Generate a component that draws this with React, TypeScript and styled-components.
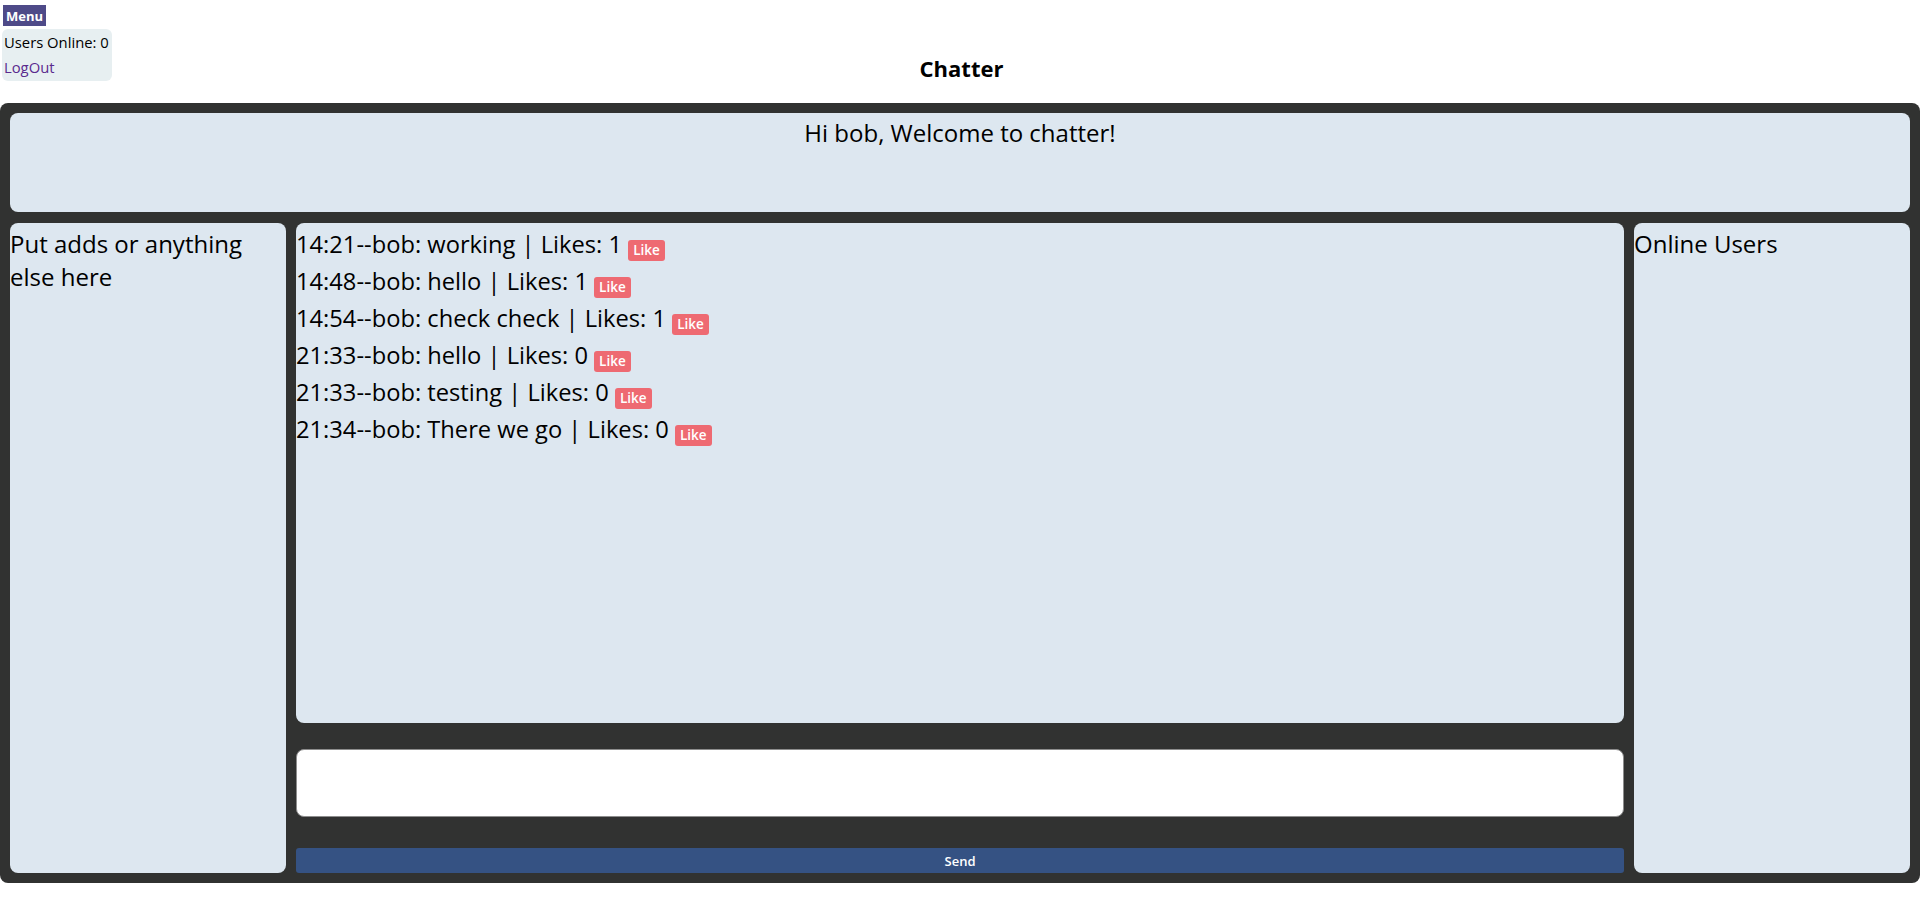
import styled, { createGlobalStyle } from "styled-components";

const GlobalStyle = createGlobalStyle`
  body {
    margin: 0;
    background: #ffffff;
    font-family: "Open Sans", "Noto Sans", sans-serif;
    color: #000000;
  }
`;

type Message = {
  time: string;
  user: string;
  text: string;
  likes: number;
};

const messages: Message[] = [
  { time: "14:21", user: "bob", text: "working", likes: 1 },
  { time: "14:48", user: "bob", text: "hello", likes: 1 },
  { time: "14:54", user: "bob", text: "check check", likes: 1 },
  { time: "21:33", user: "bob", text: "hello", likes: 0 },
  { time: "21:33", user: "bob", text: "testing", likes: 0 },
  { time: "21:34", user: "bob", text: "There we go", likes: 0 },
];

const App = () => {
  return (
    <>
      <GlobalStyle />
      <TopBar>
        <NavColumn>
          <MenuButton>Menu</MenuButton>
          <UserBox>
            <span>Users Online: 0</span>
            <LogOutLink href="#">LogOut</LogOutLink>
          </UserBox>
        </NavColumn>
        <Title>Chatter</Title>
      </TopBar>
      <Board>
        <Welcome>Hi bob, Welcome to chatter!</Welcome>
        <Columns>
          <SidePanel>Put adds or anything else here</SidePanel>
          <ChatColumn>
            <MessageList>
              {messages.map((m, i) => (
                <MessageRow key={i}>
                  {m.time}--{m.user}: {m.text} | Likes: {m.likes}{" "}
                  <LikeButton>Like</LikeButton>
                </MessageRow>
              ))}
            </MessageList>
            <MessageInput />
            <SendButton>Send</SendButton>
          </ChatColumn>
          <SidePanel>Online Users</SidePanel>
        </Columns>
      </Board>
    </>
  );
};

const TopBar = styled.div`
  display: grid;
  grid-template-columns: 1fr auto 1fr;
  align-items: end;
  height: 103px;
  padding-left: 3px;
  box-sizing: border-box;
`;

const NavColumn = styled.div`
  display: flex;
  flex-direction: column;
  align-items: flex-start;
  align-self: start;
  padding-top: 5px;
`;

const MenuButton = styled.button`
  background: #4e4a88;
  color: #ffffff;
  border: none;
  font-family: "Open Sans", sans-serif;
  font-weight: bold;
  font-size: 13px;
  height: 21px;
  width: 43px;
  padding: 0;
`;

const UserBox = styled.div`
  display: flex;
  flex-direction: column;
  margin-top: 3px;
  margin-left: -1px;
  background: #e7eff1;
  border-radius: 6px;
  padding: 1px 0 1px 2px;
  width: 110px;
  height: 52px;
  box-sizing: border-box;
  font-size: 14.8px;
  line-height: 25px;
  white-space: nowrap;
`;

const LogOutLink = styled.a`
  color: #5a2a8e;
  text-decoration: none;
`;

const Title = styled.h2`
  grid-column: 2;
  margin: 0 0 20px 0;
  font-size: 22px;
  font-weight: bold;
`;

const Board = styled.div`
  display: flex;
  flex-direction: column;
  gap: 11px;
  background: #313231;
  border-radius: 8px;
  padding: 10px;
  height: 780px;
  box-sizing: border-box;
`;

const Panel = styled.div`
  background: #dde7f0;
  border-radius: 8px;
  font-size: 24px;
`;

const Welcome = styled(Panel)`
  height: 99px;
  padding-top: 3px;
  box-sizing: border-box;
  text-align: center;
  flex-shrink: 0;
`;

const Columns = styled.div`
  flex: 1;
  display: grid;
  grid-template-columns: 276px 1fr 276px;
  gap: 10px;
`;

const SidePanel = styled(Panel)`
  padding-top: 4px;
`;

const ChatColumn = styled.div`
  display: flex;
  flex-direction: column;
`;

const MessageList = styled(Panel)`
  height: 500px;
  padding-top: 3px;
  box-sizing: border-box;
  font-size: 23.7px;
`;

const MessageRow = styled.div`
  line-height: 37px;
`;

const LikeButton = styled.button`
  background: #ee6a72;
  color: #ffffff;
  border: none;
  border-radius: 3px;
  font-family: "Open Sans", sans-serif;
  font-weight: 600;
  font-size: 13.5px;
  height: 21px;
  padding: 0 5px;
  vertical-align: -2px;
`;

const MessageInput = styled.textarea`
  margin-top: 26px;
  height: 68px;
  border: 1px solid #8d8d8d;
  border-radius: 8px;
  box-sizing: border-box;
  resize: none;
  background: #ffffff;
`;

const SendButton = styled.button`
  margin-top: 31px;
  height: 25px;
  background: #355283;
  color: #ffffff;
  border: none;
  border-radius: 3px;
  font-family: "Open Sans", sans-serif;
  font-weight: 600;
  font-size: 13px;
`;

export default App;
